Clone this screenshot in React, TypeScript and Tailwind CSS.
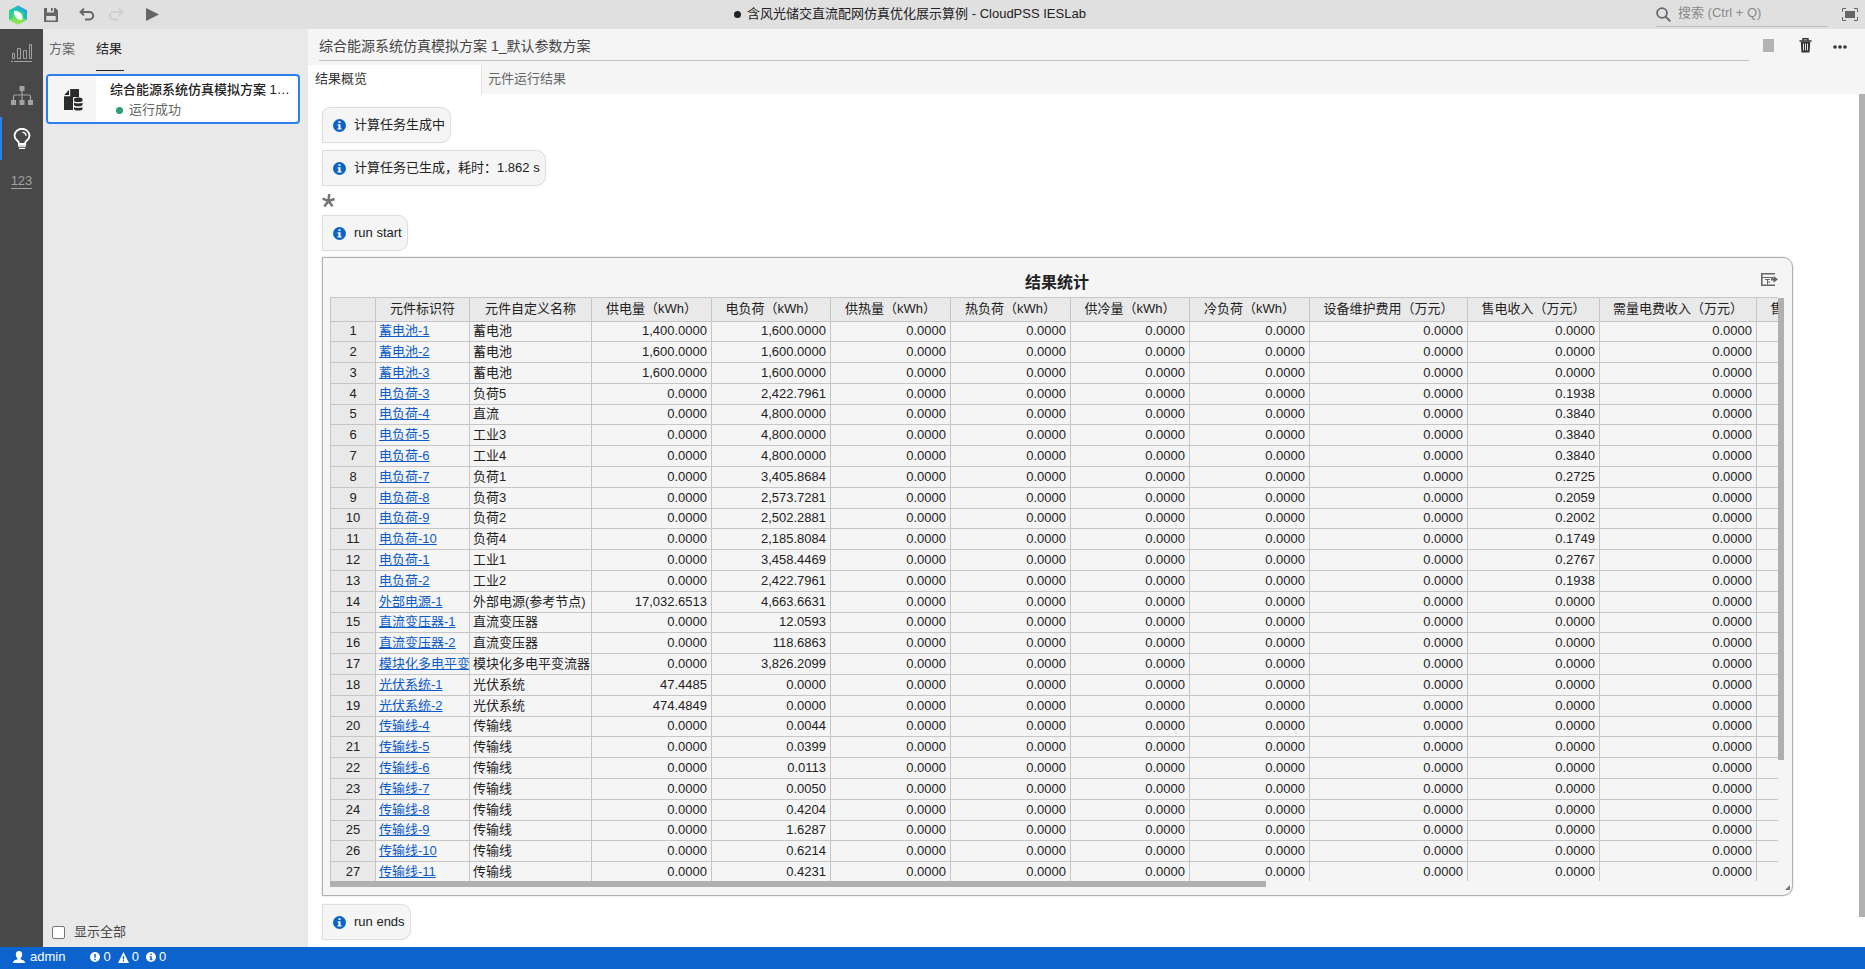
import type { ReactNode } from 'react'

interface Row {
  id: string
  name: string
  supply: string
  load: string
  income: string
}

const toRow = ([id, name, supply, load, income]: string[]): Row => ({ id, name, supply, load, income })

const rows: Row[] = [
  ['蓄电池-1', '蓄电池', '1,400.0000', '1,600.0000', '0.0000'],
  ['蓄电池-2', '蓄电池', '1,600.0000', '1,600.0000', '0.0000'],
  ['蓄电池-3', '蓄电池', '1,600.0000', '1,600.0000', '0.0000'],
  ['电负荷-3', '负荷5', '0.0000', '2,422.7961', '0.1938'],
  ['电负荷-4', '直流', '0.0000', '4,800.0000', '0.3840'],
  ['电负荷-5', '工业3', '0.0000', '4,800.0000', '0.3840'],
  ['电负荷-6', '工业4', '0.0000', '4,800.0000', '0.3840'],
  ['电负荷-7', '负荷1', '0.0000', '3,405.8684', '0.2725'],
  ['电负荷-8', '负荷3', '0.0000', '2,573.7281', '0.2059'],
  ['电负荷-9', '负荷2', '0.0000', '2,502.2881', '0.2002'],
  ['电负荷-10', '负荷4', '0.0000', '2,185.8084', '0.1749'],
  ['电负荷-1', '工业1', '0.0000', '3,458.4469', '0.2767'],
  ['电负荷-2', '工业2', '0.0000', '2,422.7961', '0.1938'],
  ['外部电源-1', '外部电源(参考节点)', '17,032.6513', '4,663.6631', '0.0000'],
  ['直流变压器-1', '直流变压器', '0.0000', '12.0593', '0.0000'],
  ['直流变压器-2', '直流变压器', '0.0000', '118.6863', '0.0000'],
  ['模块化多电平变流器-1', '模块化多电平变流器', '0.0000', '3,826.2099', '0.0000'],
  ['光伏系统-1', '光伏系统', '47.4485', '0.0000', '0.0000'],
  ['光伏系统-2', '光伏系统', '474.4849', '0.0000', '0.0000'],
  ['传输线-4', '传输线', '0.0000', '0.0044', '0.0000'],
  ['传输线-5', '传输线', '0.0000', '0.0399', '0.0000'],
  ['传输线-6', '传输线', '0.0000', '0.0113', '0.0000'],
  ['传输线-7', '传输线', '0.0000', '0.0050', '0.0000'],
  ['传输线-8', '传输线', '0.0000', '0.4204', '0.0000'],
  ['传输线-9', '传输线', '0.0000', '1.6287', '0.0000'],
  ['传输线-10', '传输线', '0.0000', '0.6214', '0.0000'],
  ['传输线-11', '传输线', '0.0000', '0.4231', '0.0000'],
].map(toRow)

const columns = [
  { label: '', width: 46 },
  { label: '元件标识符', width: 94 },
  { label: '元件自定义名称', width: 122 },
  { label: '供电量（kWh）', width: 120 },
  { label: '电负荷（kWh）', width: 119 },
  { label: '供热量（kWh）', width: 120 },
  { label: '热负荷（kWh）', width: 120 },
  { label: '供冷量（kWh）', width: 119 },
  { label: '冷负荷（kWh）', width: 120 },
  { label: '设备维护费用（万元）', width: 158 },
  { label: '售电收入（万元）', width: 132 },
  { label: '需量电费收入（万元）', width: 157 },
  { label: '售热收入（万元）', width: 132 },
]

const tableWidth = columns.reduce((sum, c) => sum + c.width, 0)

function InfoIcon({ className }: { className: string }) {
  return (
    <svg className={className} viewBox="0 0 12 12" aria-hidden="true">
      <circle cx="6" cy="6" r="6" fill="currentColor" />
      <path d="M5 2h2v1.700H5zM4.200 4.800H7v3.700h.9v1.200H4.200V8.500H5V6h-.8z" className="fill-[#f5f5f5]" />
    </svg>
  )
}

function Message({ children, first }: { children: ReactNode; first?: boolean }) {
  return (
    <div
      className={`flex h-[36px] w-fit items-center gap-2 rounded-r-[10px] border border-[#dedede] bg-[#f5f5f5] pr-[5px] pl-[10px] shadow-[0_0_2px_rgba(0,0,0,0.08)] ${
        first ? 'rounded-tl-[8px]' : ''
      }`}
    >
      <InfoIcon className="size-[13px] text-[#0c63c6]" />
      <span className="pb-px">{children}</span>
    </div>
  )
}

function Logo() {
  return (
    <svg className="mr-[16px] size-[20px]" viewBox="0 0 20 20" aria-hidden="true">
      <defs>
        <linearGradient id="logo-edge" x1="0" y1="1" x2="1" y2="0">
          <stop offset="0" stopColor="#3fdc4e" />
          <stop offset=".5" stopColor="#20c8b0" />
          <stop offset="1" stopColor="#2a8ff0" />
        </linearGradient>
        <linearGradient id="logo-core" x1="0" y1="0" x2="0" y2="1">
          <stop offset="0" stopColor="#22cfa0" />
          <stop offset="1" stopColor="#a4e83a" />
        </linearGradient>
      </defs>
      <path d="M10 .5 19 5.200v9.600l-9 4.700-9-4.700V5.200z" fill="url(#logo-edge)" />
      <path d="M10 4.500 15.500 7.500v6L19 14.800l-9 4.700-9-4.700 3.500-1.800V7.500z" fill="url(#logo-core)" />
      <path d="M6 5.800c5 .2 8.200 2.700 8.200 6.700 0 1-.2 1.700-.7 2.500C8.500 14.800 5.800 11.500 6 5.800z" fill="#fff" />
    </svg>
  )
}

function TitleBar() {
  return (
    <header className="flex h-[29px] shrink-0 items-center bg-[#e0e0e0]">
      <div className="flex w-[172px] items-center pl-[8px] text-[#666]">
        <Logo />
        <button aria-label="保存" className="mr-[21px]">
          <svg className="size-[14px]" viewBox="0 0 14 14" fill="currentColor">
            <path d="M0 0h11.500L14 2.500V14H0V0zm2.300 8v4.500h9.400V8zM3 0v4.500h7V0H8.800v3H7V0z" fillRule="evenodd" />
          </svg>
        </button>
        <button aria-label="撤销" className="mr-[13px]">
          <svg className="h-[13px] w-[16px]" viewBox="0 0 16 13" fill="none" stroke="currentColor" strokeWidth="2">
            <path d="M2 4h8.500a3.700 3.700 0 0 1 0 7.400H6M5 .6 1.600 4 5 7.400" />
          </svg>
        </button>
        <button aria-label="重做" className="mr-[22px] text-[#cfcfcf]" disabled>
          <svg className="h-[13px] w-[16px]" viewBox="0 0 16 13" fill="none" stroke="currentColor" strokeWidth="2">
            <path d="M14 4H5.500a3.700 3.700 0 0 0 0 7.400H10M11 .6 14.400 4 11 7.400" />
          </svg>
        </button>
        <button aria-label="运行">
          <svg className="h-[13px] w-[13px]" viewBox="0 0 13 13" fill="currentColor">
            <path d="M0 0 13 6.500 0 13z" />
          </svg>
        </button>
      </div>
      <h1 className="flex flex-1 items-center justify-center gap-[6px] text-[#222]">
        <span className="size-[7px] rounded-full bg-[#222]" />
        <span className="pb-0.5">含风光储交直流配网仿真优化展示算例 - CloudPSS IESLab</span>
      </h1>
      <div className="flex w-[217px] items-center justify-between pr-[7px] pl-[8px] text-[#666]">
        <label className="flex h-[24px] w-[172px] items-center gap-[7px] border-b border-[#bdbdbd]">
          <svg className="size-[15px] shrink-0" viewBox="0 0 15 15" fill="none" stroke="currentColor" strokeWidth="1.800">
            <circle cx="6" cy="6" r="4.900" />
            <path d="m9.500 9.500 4.800 4.800" />
          </svg>
          <input
            type="search"
            aria-label="搜索"
            placeholder="搜索 (Ctrl + Q)"
            className="h-[22px] w-full bg-transparent pb-[3px] outline-none placeholder:text-[#8a8a8a]"
          />
        </label>
        <button aria-label="全屏">
          <svg className="h-[13px] w-[16px]" viewBox="0 0 16 13" fill="none" stroke="currentColor">
            <path d="M.5 4V.5H4M12 .5h3.500V4M15.500 9v3.500H12M4 12.500H.5V9" />
            <path d="M3 3h10v7H3z" fill="currentColor" stroke="none" />
          </svg>
        </button>
      </div>
    </header>
  )
}

function RailButton({ label, active, children }: { label: string; active?: boolean; children: ReactNode }) {
  return (
    <button
      aria-label={label}
      className={`flex h-[43px] w-full items-center justify-center border-x-2 border-r-transparent ${
        active ? 'border-l-[#2b80ee] text-white' : 'border-l-transparent text-[#a2a2a2]'
      }`}
    >
      {children}
    </button>
  )
}

function Rail() {
  return (
    <nav className="w-[43px] shrink-0 bg-[#484848] pt-0.5">
      <RailButton label="数据">
        <svg className="size-[21px]" viewBox="0 0 21 21" fill="none" stroke="currentColor">
          <path d="M1.500 11.500h2v5h-2zM6.500 6.500h3v10h-3zM12.500 8.500h3v8h-3zM18.500 2.500h2v14h-2z" />
          <path d="M0 19.500h2M3 19.500h18" />
        </svg>
      </RailButton>
      <RailButton label="拓扑">
        <svg className="size-[22px]" viewBox="0 0 22 22" fill="currentColor">
          <path d="M8.500 1h5v5h-5zM0 15h5v5H0zM8.500 15h5v5h-5zM17 15h5v5h-5z" />
          <path d="M11 5v10M2.500 15v-3.500q0-1.500 1.500-1.500h14q1.500 0 1.500 1.500V15" fill="none" stroke="currentColor" strokeWidth="1.200" />
        </svg>
      </RailButton>
      <RailButton label="方案" active>
        <svg className="h-[21px] w-[18px]" viewBox="0 0 18 21" fill="none" stroke="currentColor" strokeWidth="1.800">
          <path d="M5.800 16v-1.500C5.500 13 1.500 11.500 1.500 7.800a7.500 7 0 0 1 15 0c0 3.700-4 5.200-4.300 6.700V16z" />
          <path d="M9.500 4.200a3.800 3.800 0 0 1 3.500 3.600" strokeWidth="1.400" />
          <path d="M5 18h8M6 20.300h6" strokeWidth="1.300" />
        </svg>
      </RailButton>
      <RailButton label="数值">
        <span className="border-b border-current text-[13px] leading-[14px]">123</span>
      </RailButton>
    </nav>
  )
}

function Sidebar() {
  return (
    <aside className="flex w-[265px] shrink-0 flex-col bg-[#e9e9e9]">
      <div className="flex gap-[20px] pl-[6px]">
        <button className="h-[42px] w-[27px] border-b border-transparent pb-0.5 text-left text-[#666]">方案</button>
        <button className="h-[42px] w-[28px] border-b border-[#222] pb-0.5 text-left text-[#222]">结果</button>
      </div>
      <button className="mt-[3px] mr-[8px] ml-[3px] flex h-[50px] overflow-hidden rounded border-2 border-[#2b80ee] bg-white text-left">
        <span className="flex h-full w-[48px] shrink-0 items-center justify-center bg-[#f5f5f5] pt-0.5 pl-0.5">
          <svg className="h-[22px] w-[19px]" viewBox="0 0 19 22" aria-hidden="true" fill="#2b2b2b">
            <path d="M6.200 0H15v8H9.500v13H0V7.200h6.200z" />
            <path d="M5 .8v5.200H.3z" />
            <path d="M9 8.500h10V22H9z" className="fill-[#f5f5f5]" />
            <path d="M10 10c0-2 8.500-2 8.500 0v1.500c0 2-8.500 2-8.500 0zM10 13.600c1.500 1.200 7 1.200 8.500 0v2.200c0 2-8.500 2-8.500 0zM10 18c1.500 1.200 7 1.200 8.500 0v2c0 2-8.500 2-8.500 0z" />
          </svg>
        </span>
        <span className="flex h-full min-w-0 flex-col justify-center pt-0.5 pr-[4px] pl-[14px] leading-[20px]">
          <span className="truncate font-medium text-[#222]">综合能源系统仿真模拟方案 1_默认参数方案</span>
          <span className="flex items-center gap-[6px] pl-[6px] text-[#666]">
            <span className="size-[7px] rounded-full bg-[#2d9b78]" />
            运行成功
          </span>
        </span>
      </button>
      <label className="mt-auto mb-[6px] flex items-center gap-[9px] pl-[9px] leading-[18px] text-[#444]">
        <input
          type="checkbox"
          className="size-[13px] appearance-none rounded-[2px] border border-[#767676] bg-white checked:bg-[#2b80ee]"
        />
        显示全部
      </label>
    </aside>
  )
}

function ResultTable() {
  const cell = 'overflow-hidden border-r border-b border-[#c6c6c6] pb-0.5 whitespace-nowrap'
  const text = `${cell} pl-[3px]`
  const num = `${cell} pr-1 text-right`
  return (
    <table className="table-fixed border-separate border-spacing-0 leading-[17px] text-[#222]" style={{ width: tableWidth }}>
      <colgroup>
        {columns.map((c, i) => (
          <col key={i} style={{ width: c.width }} />
        ))}
      </colgroup>
      <thead>
        <tr className="h-[25px]">
          {columns.map((c, i) => (
            <th
              key={i}
              className="border-y border-r border-[#c6c6c6] bg-[#e9e9e9] pb-0.5 font-normal whitespace-nowrap first:border-l"
            >
              {c.label}
            </th>
          ))}
        </tr>
      </thead>
      <tbody>
        {rows.map((row, i) => (
          <tr key={row.id} className={i === 0 || i % 5 === 4 ? 'h-[20px]' : 'h-[21px]'}>
            <th className="border-x border-b border-[#c6c6c6] bg-[#e9e9e9] pb-0.5 font-normal">{i + 1}</th>
            <td className={text}>
              <a href="#" className="text-[#0c5bc6] underline">
                {row.id}
              </a>
            </td>
            <td className={text}>{row.name}</td>
            <td className={num}>{row.supply}</td>
            <td className={num}>{row.load}</td>
            <td className={num}>0.0000</td>
            <td className={num}>0.0000</td>
            <td className={num}>0.0000</td>
            <td className={num}>0.0000</td>
            <td className={num}>0.0000</td>
            <td className={num}>{row.income}</td>
            <td className={num}>0.0000</td>
            <td className={num}>0.0000</td>
          </tr>
        ))}
      </tbody>
    </table>
  )
}

function ResultPanel() {
  return (
    <section className="relative mt-[6px] flex h-[639px] flex-col rounded-r-[10px] border border-[#b0b0b0] bg-[#f5f5f5] pr-[8px] pb-[8px] pl-[7px] shadow-[0_0_2px_rgba(0,0,0,0.2)]">
      <div className="grid h-[39px] shrink-0 grid-cols-[1fr_auto_1fr] items-center pt-[10px]">
        <h2 className="col-start-2 text-[16px] leading-[20px] font-bold text-[#222]">结果统计</h2>
        <button aria-label="导出" className="mr-[6px] mb-[6px] justify-self-end text-[#666]">
          <svg className="h-[13px] w-[17px]" viewBox="0 0 17 13" fill="none" stroke="currentColor">
            <path d="M14 .8H.8v11.400H14" strokeWidth="1.600" />
            <path d="M1 4.500h11M4 6.500h5M6.500 6.500v5M6.500 9H9" />
            <path d="M10 5.300h2.500V3L17 6.300l-4.500 3.400V7.400H10z" fill="currentColor" stroke="none" />
          </svg>
        </button>
      </div>
      <div className="flex min-h-0 flex-1">
        <div className="min-w-0 flex-1 overflow-hidden">
          <ResultTable />
        </div>
        <div className="w-[6px] shrink-0 pt-px">
          <div className="h-[462px] bg-[#b0b0b0]" />
        </div>
      </div>
      <div className="h-[6px] shrink-0">
        <div className="h-full w-[936px] bg-[#b0b0b0]" />
      </div>
      <svg className="absolute right-[2px] bottom-[5px] size-[5px]" viewBox="0 0 5 5" aria-hidden="true">
        <path d="M5 0v5H0z" fill="#777" />
      </svg>
    </section>
  )
}

function Main() {
  return (
    <main className="flex min-w-0 flex-1 flex-col bg-white">
      <div className="flex h-[36px] shrink-0 items-start bg-[#f5f5f5] pl-[11px]">
        <input
          aria-label="方案名称"
          defaultValue="综合能源系统仿真模拟方案 1_默认参数方案"
          className="h-[32px] min-w-0 flex-1 border-b border-[#c0c0c0] bg-transparent text-[14px] text-[#444] outline-none"
        />
        <div className="flex h-[32px] w-[116px] items-center pl-[14px] text-[#333]">
          <button aria-label="停止" className="mr-[25px] h-[13px] w-[11px] bg-[#b3b3b3]" disabled />
          <button aria-label="删除" className="mr-[21px]">
            <svg className="h-[15px] w-[13px]" viewBox="0 0 13 15" fill="none" stroke="currentColor">
              <path d="M.5 3h12M4 2.500V.8h5v1.700" strokeWidth="1.400" />
              <path d="M1.800 4h9.400l-.7 10.500h-8z" fill="currentColor" stroke="none" />
              <path d="M4.500 5.500v7M6.500 5.500v7M8.500 5.500v7" stroke="#f5f5f5" strokeWidth=".9" />
            </svg>
          </button>
          <button aria-label="更多" className="pt-1">
            <svg className="h-[4px] w-[14px]" viewBox="0 0 14 4" fill="currentColor">
              <circle cx="2" cy="2" r="1.800" />
              <circle cx="7" cy="2" r="1.800" />
              <circle cx="12" cy="2" r="1.800" />
            </svg>
          </button>
        </div>
      </div>
      <div className="flex h-[29px] shrink-0 bg-[#f5f5f5]">
        <button className="w-[174px] border-r border-[#e4e4e4] bg-white pb-0.5 pl-[7px] text-left text-[#333]">结果概览</button>
        <button className="w-[174px] pb-0.5 pl-[6px] text-left text-[#666]">元件运行结果</button>
      </div>
      <div className="flex min-h-0 flex-1">
        <div className="min-w-0 flex-1 overflow-hidden pt-[13px] pr-[66px] pl-[14px] text-[#222]">
          <div className="flex flex-col gap-[7px]">
            <Message first>计算任务生成中</Message>
            <Message>计算任务已生成，耗时：1.862 s</Message>
          </div>
          <svg className="my-[8px] size-[13px]" viewBox="0 0 13 13" fill="none" stroke="#757575" strokeWidth="2.500" aria-hidden="true">
            <path d="M6.500 7 7.200 0M6.500 7 12.600 5M6.500 7l4 5.200M6.500 7l-4.200 5.500M6.500 7 .6 4.600" />
          </svg>
          <Message>run start</Message>
          <ResultPanel />
          <div className="mt-[8px]">
            <Message>run ends</Message>
          </div>
        </div>
        <div className="w-[6px] shrink-0">
          <div className="h-[823px] bg-[#b0b0b0]" />
        </div>
      </div>
    </main>
  )
}

function StatusBar() {
  return (
    <footer className="flex h-[22px] shrink-0 items-center bg-[#0c63ce] pb-0.5 pl-[13px] text-white">
      <button className="flex items-center gap-[5px]">
        <svg className="h-[12px] w-[12px]" viewBox="0 0 12 12" fill="currentColor" aria-hidden="true">
          <path d="M6 0c2.200 0 3.200 1.500 3.200 3.500S8 7 7.500 7.500v.8c1.500.7 4.500 1 4.500 3.700H0c0-2.700 3-3 4.500-3.700v-.8C4 7 2.800 5.500 2.800 3.500S3.800 0 6 0z" />
        </svg>
        admin
      </button>
      <div className="ml-[25px] flex items-center gap-[7px]">
        <span className="flex items-center gap-[3px]">
          <svg className="size-[10px]" viewBox="0 0 10 10" aria-hidden="true">
            <circle cx="5" cy="5" r="5" fill="#fff" />
            <path d="M5 2v3.700M5 6.700v1.500" stroke="#0c63ce" strokeWidth="1.500" />
          </svg>
          0
        </span>
        <span className="flex items-center gap-[3px]">
          <svg className="size-[11px]" viewBox="0 0 11 11" aria-hidden="true">
            <path d="M5.500 0 11 11H0z" fill="#fff" />
            <path d="M5.500 4v3.500M5.500 8.300v1.400" stroke="#0c63ce" strokeWidth="1.300" />
          </svg>
          0
        </span>
        <span className="flex items-center gap-[3px]">
          <svg className="size-[10px]" viewBox="0 0 10 10" aria-hidden="true">
            <circle cx="5" cy="5" r="5" fill="#fff" />
            <path d="M4.200 1.700h1.600V3H4.200zM3.600 4.200h2.200v3h.7v1h-2.900v-1h.7V5.200h-.7z" fill="#0c63ce" />
          </svg>
          0
        </span>
      </div>
    </footer>
  )
}

export default function App() {
  return (
    <div className="flex h-screen flex-col overflow-hidden font-['Liberation_Sans','Noto_Sans_CJK_SC',sans-serif] text-[13px] leading-[18px]">
      <TitleBar />
      <div className="flex min-h-0 flex-1">
        <Rail />
        <Sidebar />
        <Main />
      </div>
      <StatusBar />
    </div>
  )
}
